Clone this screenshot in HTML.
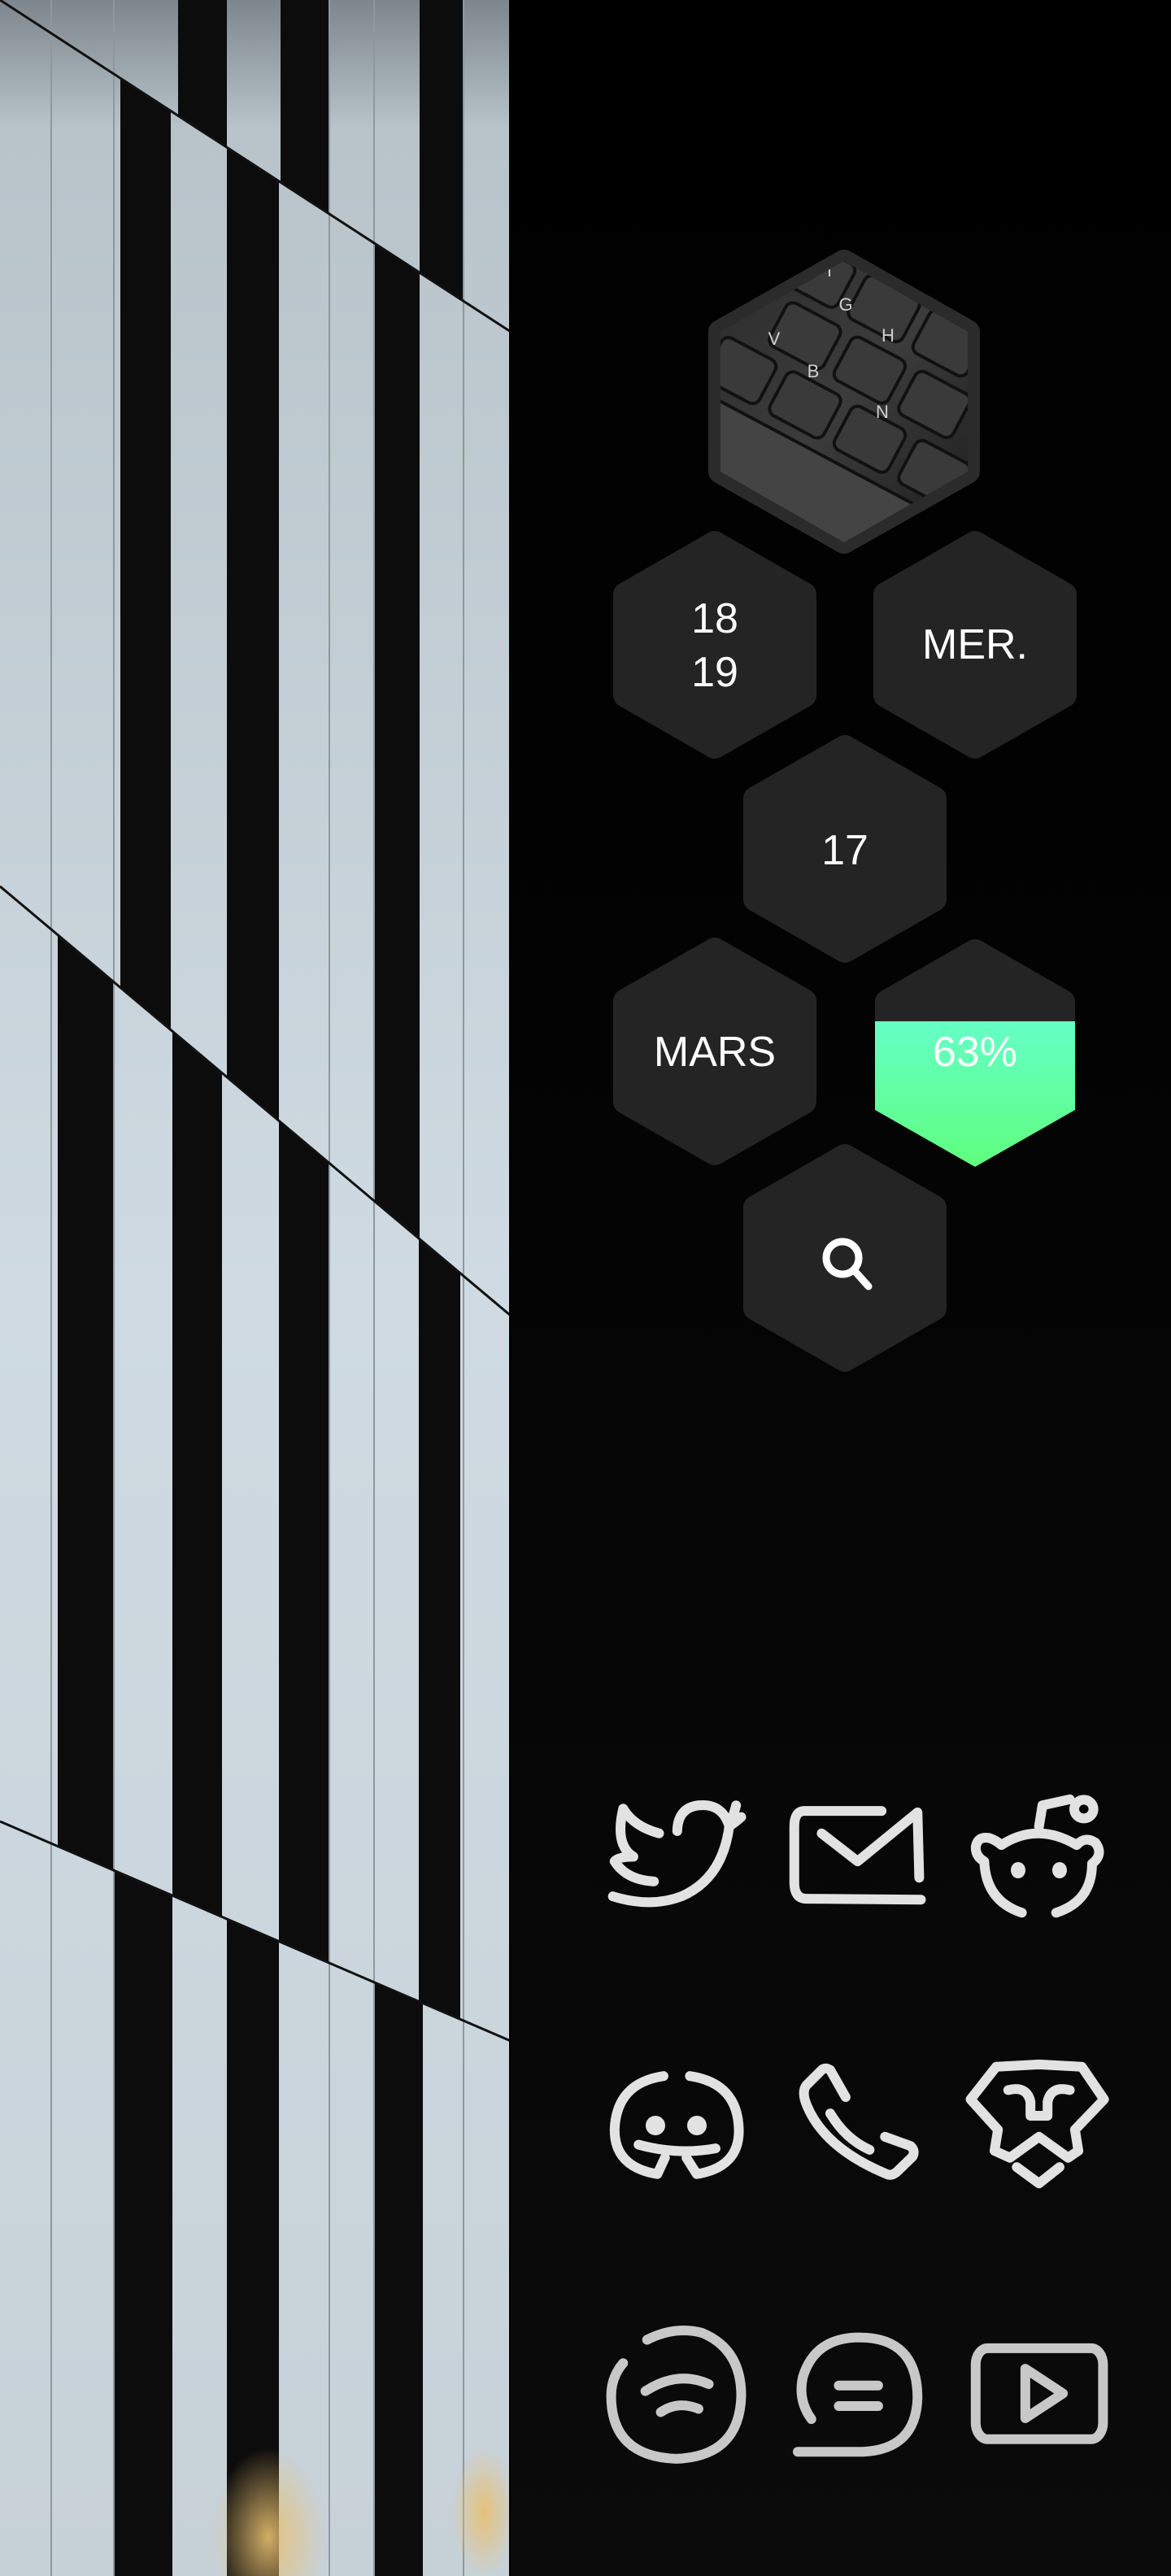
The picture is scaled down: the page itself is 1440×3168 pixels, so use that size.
<!DOCTYPE html>
<html><head><meta charset="utf-8"><style>
html,body{margin:0;padding:0;background:#000;}
body{width:1440px;height:3168px;position:relative;overflow:hidden;font-family:"Liberation Sans",sans-serif;}
#right{position:absolute;left:628px;top:0;width:812px;height:3168px;background:linear-gradient(#000 0%,#030303 40%,#0b0b0b 100%);}
svg{position:absolute;left:0;top:0;}
</style></head><body>
<div id="right"></div>
<svg width="628" height="3168" viewBox="0 0 628 3168">
<defs>
<linearGradient id="pan" x1="0" y1="0" x2="0" y2="1">
<stop offset="0" stop-color="#7d868d"/><stop offset="0.05" stop-color="#b8c3ca"/><stop offset="0.5" stop-color="#cfdae2"/><stop offset="1" stop-color="#c7d1d8"/></linearGradient>
<clipPath id="cA"><polygon points="0,0 628,0 628,408"/></clipPath>
<clipPath id="cB"><polygon points="0,0 628,408 628,1618 0,1090"/></clipPath>
<clipPath id="cC"><polygon points="0,1090 628,1618 628,2510 0,2240"/></clipPath>
<clipPath id="cD"><polygon points="0,2240 628,2510 628,3168 0,3168"/></clipPath>
<radialGradient id="glow" cx="0.5" cy="0.5" r="0.5"><stop offset="0" stop-color="#e8c070" stop-opacity="0.9"/><stop offset="1" stop-color="#e8c070" stop-opacity="0"/></radialGradient>
</defs>
<rect width="628" height="3168" fill="url(#pan)"/>
<g fill="#0c0c0c">
<g clip-path="url(#cA)"><rect x="219" y="0" width="60" height="3168"/><rect x="345" y="0" width="59" height="3168"/><rect x="516" y="0" width="53" height="3168"/></g>
<g clip-path="url(#cB)"><rect x="148" y="0" width="62" height="3168"/><rect x="279" y="0" width="64" height="3168"/><rect x="461" y="0" width="55" height="3168"/></g>
<g clip-path="url(#cC)"><rect x="71" y="0" width="70" height="3168"/><rect x="212" y="0" width="61" height="3168"/><rect x="343" y="0" width="61" height="3168"/><rect x="515" y="0" width="51" height="3168"/></g>
<g clip-path="url(#cD)"><rect x="141" y="0" width="71" height="3168"/><rect x="279" y="0" width="64" height="3168"/><rect x="461" y="0" width="59" height="3168"/></g>
</g>
<g stroke="#8e989f" stroke-width="2">
<line x1="63" y1="0" x2="63" y2="3168"/><line x1="140" y1="0" x2="140" y2="3168"/><line x1="405" y1="0" x2="405" y2="3168"/><line x1="460" y1="0" x2="460" y2="3168"/><line x1="570" y1="0" x2="570" y2="3168"/>
</g>
<g stroke="#111" stroke-width="3">
<line x1="0" y1="0" x2="628" y2="408"/><line x1="0" y1="1090" x2="628" y2="1618"/><line x1="0" y1="2240" x2="628" y2="2510"/>
</g>
<ellipse cx="330" cy="3120" rx="70" ry="110" fill="url(#glow)"/>
<ellipse cx="595" cy="3090" rx="40" ry="80" fill="url(#glow)"/>
<rect x="626" y="0" width="2" height="3168" fill="#000"/>
</svg>

<svg width="1440" height="3168" viewBox="0 0 1440 3168">
<defs>
<linearGradient id="grn" x1="0" y1="0" x2="0" y2="1"><stop offset="0" stop-color="#64ffc6"/><stop offset="1" stop-color="#5fff7a"/></linearGradient>
<linearGradient id="kb" x1="0" y1="0" x2="1" y2="1"><stop offset="0" stop-color="#2a2a2a"/><stop offset="0.5" stop-color="#3c3c3c"/><stop offset="1" stop-color="#1a1a1a"/></linearGradient>
<clipPath id="imgclip"><path d="M1038 321 L1190 408 L1190 580 L1038 667 L886 580 L886 408 Z" stroke-linejoin="round"/></clipPath>
<clipPath id="batclip"><path d="M1199 1155 L1322 1225 L1322 1365 L1199 1435 L1076 1365 L1076 1225 Z"/></clipPath>
</defs>
<!-- image hex -->
<path d="M1038 322 L1190 408 L1190 580 L1038 666 L886 580 L886 408 Z" fill="#2b2b2b" stroke="#2b2b2b" stroke-width="30" stroke-linejoin="round"/>
<g clip-path="url(#imgclip)">
<rect x="870" y="300" width="340" height="380" fill="url(#kb)"/>
<g transform="rotate(28 1038 494)" fill="#3a3a3a" stroke="#111" stroke-width="4">
<rect x="900" y="340" width="75" height="60" rx="10"/><rect x="990" y="340" width="75" height="60" rx="10"/><rect x="1080" y="340" width="75" height="60" rx="10"/>
<rect x="920" y="415" width="75" height="60" rx="10"/><rect x="1010" y="415" width="75" height="60" rx="10"/><rect x="1100" y="415" width="75" height="60" rx="10"/>
<rect x="870" y="490" width="75" height="60" rx="10"/><rect x="960" y="490" width="75" height="60" rx="10"/><rect x="1050" y="490" width="75" height="60" rx="10"/><rect x="1140" y="490" width="75" height="60" rx="10"/>
<rect x="820" y="565" width="420" height="90" rx="8" fill="#444"/>
</g>
<g fill="#cfcfcf" font-size="22" font-family="Liberation Sans,sans-serif" text-anchor="middle">
<text x="1040" y="382">G</text><text x="952" y="424">V</text><text x="1092" y="420">H</text><text x="1000" y="464">B</text><text x="1085" y="514">N</text><text x="1110" y="352">Y</text><text x="1020" y="340">T</text>
</g>
</g>
<!-- dark hexes -->
<g fill="#242424" stroke="#242424" stroke-width="30" stroke-linejoin="round">
<path d="M879 668 L989 731 L989 855 L879 918 L769 855 L769 731 Z"/>
<path d="M1199 668 L1309 731 L1309 855 L1199 918 L1089 855 L1089 731 Z"/>
<path d="M1039 919 L1149 982 L1149 1106 L1039 1169 L929 1106 L929 982 Z"/>
<path d="M879 1168 L989 1231 L989 1355 L879 1418 L769 1355 L769 1231 Z"/>
<path d="M1199 1170 L1307 1232 L1307 1356 L1199 1418 L1091 1356 L1091 1232 Z"/>
<path d="M1039 1422 L1149 1485 L1149 1609 L1039 1672 L929 1609 L929 1485 Z"/>
</g>
<g clip-path="url(#batclip)"><rect x="1070" y="1256" width="260" height="190" fill="url(#grn)"/></g>
<g fill="#fff" font-family="Liberation Sans,sans-serif" font-size="52" text-anchor="middle">
<text x="879" y="778">18</text><text x="879" y="844">19</text>
<text x="1199" y="810">MER.</text>
<text x="1039" y="1063">17</text>
<text x="879" y="1311">MARS</text>
<text x="1199" y="1311">63%</text>
</g>
<g fill="none" stroke="#fff" stroke-width="9" stroke-linecap="round">
<circle cx="1036" cy="1547" r="20"/><line x1="1051" y1="1563" x2="1068" y2="1582"/>
</g>
<!-- icons -->
<g transform="translate(720,2160) scale(0.4209,0.574)" fill="none" stroke="#e2e2e2" stroke-width="12" stroke-linecap="round" stroke-linejoin="round">
<g vector-effect="non-scaling-stroke">
<path vector-effect="non-scaling-stroke" d="M80 300 Q190 325 280 300 Q400 262 420 150"/>
<path vector-effect="non-scaling-stroke" d="M268 160 Q270 110 330 105 Q400 100 420 150 Q440 140 455 130 M420 150 Q432 128 440 105"/>
<path vector-effect="non-scaling-stroke" d="M215 165 Q140 150 110 112 Q85 190 140 215 Q95 215 85 225 Q120 265 200 268"/>
<path vector-effect="non-scaling-stroke" d="M865 117 L640 117 Q610 117 610 150 L610 270 Q610 305 645 305 L980 307"/>
<path vector-effect="non-scaling-stroke" d="M690 165 L795 225 L970 120 L975 260"/>
<path vector-effect="non-scaling-stroke" d="M1275 335 Q1170 310 1165 225 Q1140 215 1140 195 Q1145 170 1180 175 Q1200 180 1215 190 Q1320 140 1435 190 Q1460 170 1490 185 Q1515 210 1480 230 Q1480 310 1375 335"/>
<path vector-effect="non-scaling-stroke" d="M1325 150 L1335 105 L1415 92"/>
<ellipse vector-effect="non-scaling-stroke" cx="1456" cy="113" rx="28" ry="20"/>
<path vector-effect="non-scaling-stroke" d="M228 685 Q90 700 85 800 Q85 880 210 895 L232 860 M305 685 Q445 700 448 800 Q450 880 325 895 L295 860"/>
<path vector-effect="non-scaling-stroke" d="M155 832 Q270 855 380 840"/>
<path vector-effect="non-scaling-stroke" d="M760 730 L715 672 Q700 665 690 672 L645 705 Q630 720 648 750 Q700 840 880 895 Q895 900 910 890 L955 858 Q965 845 950 835 L875 815"/>
<path vector-effect="non-scaling-stroke" d="M715 765 Q760 820 830 843"/>
<path vector-effect="non-scaling-stroke" d="M1200 665 L1325 660 L1450 665 L1515 735 L1430 800 L1440 845 L1410 860 L1325 815 L1240 860 L1195 845 L1205 800 L1125 735 Z"/>
<path vector-effect="non-scaling-stroke" d="M1235 715 Q1290 705 1300 740 L1300 770 L1350 770 L1350 740 Q1360 705 1415 715"/>
<path vector-effect="non-scaling-stroke" d="M1260 880 L1325 915 L1385 880"/>
</g>
<g stroke="#c8c8c8">
<path vector-effect="non-scaling-stroke" d="M180 1250 Q260 1220 340 1235 Q455 1270 455 1370 Q450 1500 265 1505 Q75 1500 75 1370 Q75 1330 110 1300"/>
<path vector-effect="non-scaling-stroke" d="M175 1360 Q270 1315 360 1345 M220 1405 Q270 1380 330 1398"/>
<path vector-effect="non-scaling-stroke" d="M660 1420 Q620 1380 635 1330 Q670 1245 800 1245 Q970 1245 970 1375 Q965 1485 810 1490 L620 1490"/>
<path vector-effect="non-scaling-stroke" d="M740 1348 L855 1348 M740 1392 L855 1392"/>
<rect vector-effect="non-scaling-stroke" x="1140" y="1268" width="372" height="195" rx="35"/>
<path vector-effect="non-scaling-stroke" d="M1285 1312 L1395 1365 L1285 1418 Z"/>
</g>
</g>
<g fill="#e2e2e2">
<ellipse cx="1252" cy="2300" rx="9" ry="10"/><ellipse cx="1303" cy="2300" rx="9" ry="10"/>
<circle cx="806" cy="2614" r="12"/><circle cx="857" cy="2614" r="12"/>
</g>
</svg>
</body></html>
